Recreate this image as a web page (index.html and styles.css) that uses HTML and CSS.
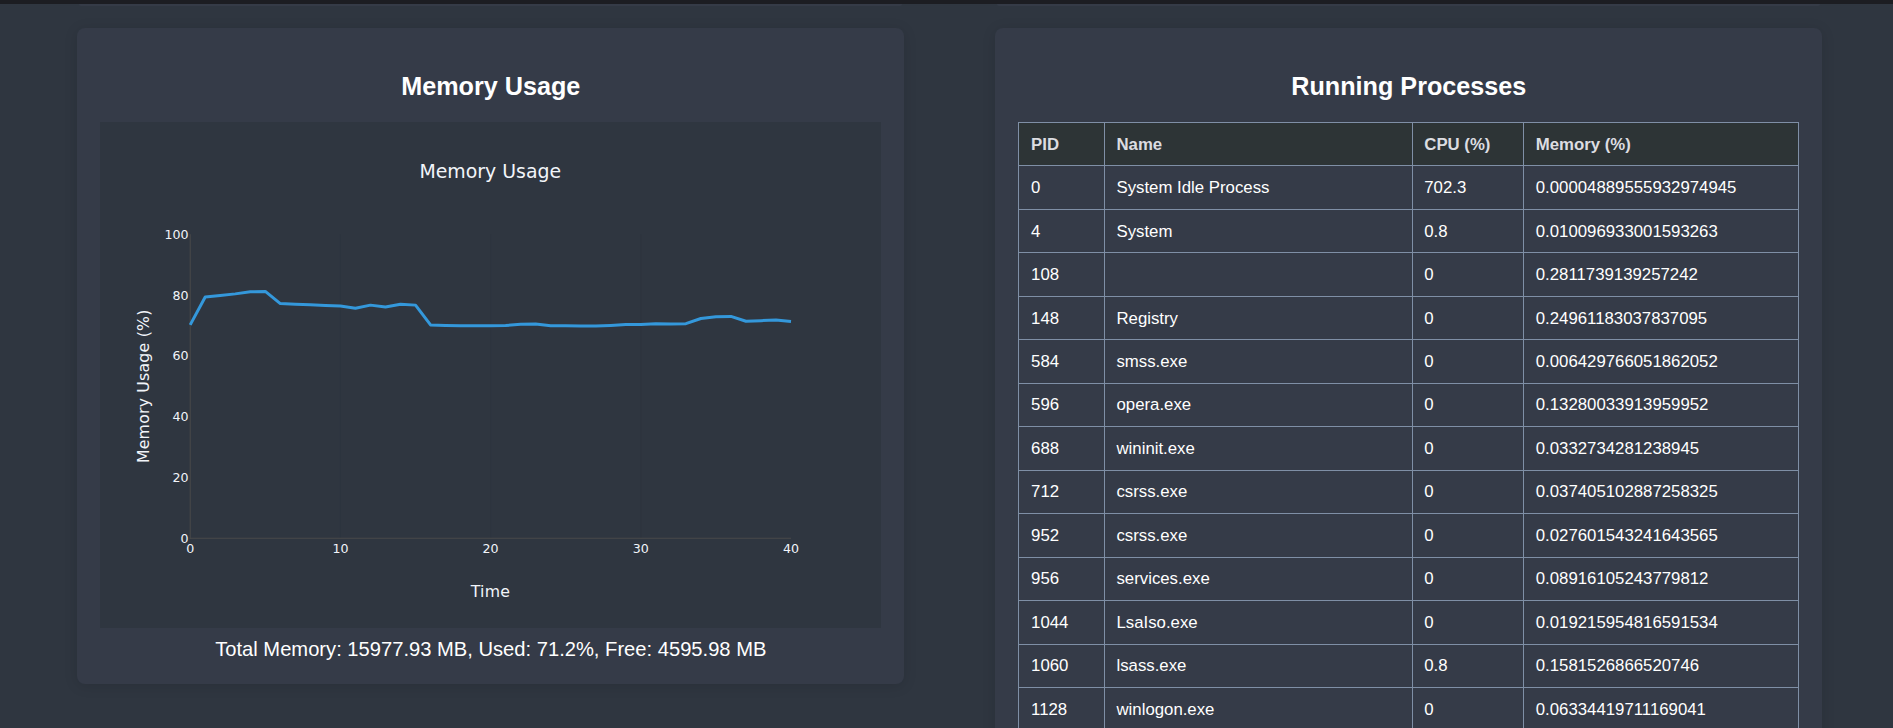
FILE: index.html
```html
<!DOCTYPE html>
<html lang="en">
<head>
<meta charset="utf-8">
<title>System Monitor</title>
<link rel="stylesheet" href="styles.css">
</head>
<body>
<div class="topbar"></div>
<div class="row stubs">
  <div class="stub"></div>
  <div class="stub"></div>
</div>
<main class="row">
  <section class="card">
    <h2>Memory Usage</h2>
    <div class="chart">
      <svg class="chart-svg" viewBox="0 0 780.6 505.6" preserveAspectRatio="none">
        <g class="grid">
          <line x1="240.4" y1="112.3" x2="240.4" y2="416.3"/>
          <line x1="390.6" y1="112.3" x2="390.6" y2="416.3"/>
          <line x1="540.8" y1="112.3" x2="540.8" y2="416.3"/>
        </g>
        <g class="axis">
          <line x1="90.2" y1="112.3" x2="90.2" y2="416.8"/>
          <line x1="89.7" y1="416.3" x2="691" y2="416.3"/>
        </g>
        <polyline class="series" points="90.2,202.89 105.22,174.92 120.24,173.4 135.26,171.88 150.28,169.76 165.3,169.45 180.32,181.61 195.34,182.22 210.36,182.83 225.38,183.44 240.4,184.04 255.42,186.17 270.44,183.13 285.46,184.96 300.48,182.22 315.5,183.13 330.52,202.89 345.54,203.5 360.56,203.8 375.58,203.8 390.6,203.8 405.62,203.5 420.64,202.28 435.66,201.98 450.68,203.8 465.7,203.8 480.72,204.11 495.74,204.11 510.76,203.5 525.78,202.59 540.8,202.59 555.82,201.68 570.84,201.98 585.86,201.68 600.88,196.51 615.9,194.68 630.92,194.38 645.94,199.24 660.96,198.64 675.98,198.03 691,199.55"/>
        <text class="title" x="390.3" y="55.7">Memory Usage</text>
        <g class="ytick">
          <text x="88.6" y="116.8">100</text>
          <text x="88.6" y="177.6">80</text>
          <text x="88.6" y="238.4">60</text>
          <text x="88.6" y="299.2">40</text>
          <text x="88.6" y="360">20</text>
          <text x="88.6" y="420.8">0</text>
        </g>
        <g class="xtick">
          <text x="90.2" y="430.8">0</text>
          <text x="240.4" y="430.8">10</text>
          <text x="390.6" y="430.8">20</text>
          <text x="540.8" y="430.8">30</text>
          <text x="691" y="430.8">40</text>
        </g>
        <text class="axis-title" x="390.4" y="474.7">Time</text>
        <text class="axis-title" transform="translate(48.5 264.3) rotate(-90)">Memory Usage (%)</text>
      </svg>
    </div>
    <p class="summary">Total Memory: 15977.93 MB, Used: 71.2%, Free: 4595.98 MB</p>
  </section>
  <section class="card">
    <h2>Running Processes</h2>
    <table class="proc">
      <colgroup>
        <col class="col-pid">
        <col class="col-name">
        <col class="col-cpu">
        <col class="col-mem">
      </colgroup>
      <thead>
        <tr><th>PID</th><th>Name</th><th>CPU (%)</th><th>Memory (%)</th></tr>
      </thead>
      <tbody>
        <tr><td>0</td><td>System Idle Process</td><td>702.3</td><td>0.00004889555932974945</td></tr>
        <tr><td>4</td><td>System</td><td>0.8</td><td>0.010096933001593263</td></tr>
        <tr><td>108</td><td></td><td>0</td><td>0.2811739139257242</td></tr>
        <tr><td>148</td><td>Registry</td><td>0</td><td>0.24961183037837095</td></tr>
        <tr><td>584</td><td>smss.exe</td><td>0</td><td>0.006429766051862052</td></tr>
        <tr><td>596</td><td>opera.exe</td><td>0</td><td>0.13280033913959952</td></tr>
        <tr><td>688</td><td>wininit.exe</td><td>0</td><td>0.0332734281238945</td></tr>
        <tr><td>712</td><td>csrss.exe</td><td>0</td><td>0.037405102887258325</td></tr>
        <tr><td>952</td><td>csrss.exe</td><td>0</td><td>0.027601543241643565</td></tr>
        <tr><td>956</td><td>services.exe</td><td>0</td><td>0.08916105243779812</td></tr>
        <tr><td>1044</td><td>LsaIso.exe</td><td>0</td><td>0.019215954816591534</td></tr>
        <tr><td>1060</td><td>lsass.exe</td><td>0.8</td><td>0.1581526866520746</td></tr>
        <tr><td>1128</td><td>winlogon.exe</td><td>0</td><td>0.06334419711169041</td></tr>
      </tbody>
    </table>
  </section>
</main>
</body>
</html>
```
FILE: styles.css
```css
html, body {
  margin: 0;
  padding: 0;
}
body {
  background: #2f3640;
  color: #ffffff;
  font-family: "Liberation Sans", Arial, sans-serif;
  font-size: 16.8px;
}
.topbar {
  height: 4px;
  background: #1c1d22;
}
.row {
  display: grid;
  grid-template-columns: 1fr 1fr;
  column-gap: 91px;
  padding: 0 70.7px 0 77.3px;
}
.stubs {
  height: 2px;
}
.stub {
  height: 2px;
  margin: 0 2px;
  background: #353b47;
  border-radius: 0 0 6px 6px;
}
main.row {
  margin-top: 22px;
  align-items: start;
}
.card {
  background: #353b48;
  border-radius: 8px;
  padding: 23.2px;
  box-shadow: 0 2px 14px rgba(0, 0, 0, 0.12);
}
.card h2 {
  margin: 20.9px 0;
  font-size: 25.2px;
  font-weight: 700;
  text-align: center;
  color: #ffffff;
}
.chart {
  height: 505.6px;
  background: #2f3640;
}
.chart-svg {
  display: block;
  width: 100%;
  height: 100%;
}
.chart-svg text {
  font-family: "DejaVu Sans", Verdana, sans-serif;
  fill: #f2f5fa;
}
.chart-svg .title {
  font-size: 18.9px;
  text-anchor: middle;
}
.chart-svg .axis-title {
  font-size: 15.75px;
  text-anchor: middle;
  letter-spacing: 0.2px;
}
.ytick text {
  font-size: 12.6px;
  text-anchor: end;
}
.xtick text {
  font-size: 12.6px;
  text-anchor: middle;
}
.grid line {
  stroke: #2d343e;
  stroke-width: 1;
}
.axis line {
  stroke: #4a4a4a;
  stroke-width: 1;
}
.series {
  fill: none;
  stroke: #3498db;
  stroke-width: 3;
  stroke-linejoin: round;
}
.summary {
  margin: 10.5px 0 0;
  font-size: 20.16px;
  text-align: center;
  color: #ffffff;
}
.proc {
  width: 100%;
  border-collapse: collapse;
  table-layout: fixed;
  font-size: 16.8px;
  line-height: 19.3px;
}
.col-pid { width: 85.4px; }
.col-name { width: 307.8px; }
.col-cpu { width: 111.5px; }
.proc th,
.proc td {
  border: 1px solid #7f8fa6;
  padding: 11.6px;
  text-align: left;
  white-space: nowrap;
}
.proc th {
  background: #2d3436;
  color: #dcdde1;
  font-weight: 700;
}
.proc td {
  color: #ffffff;
}
```
